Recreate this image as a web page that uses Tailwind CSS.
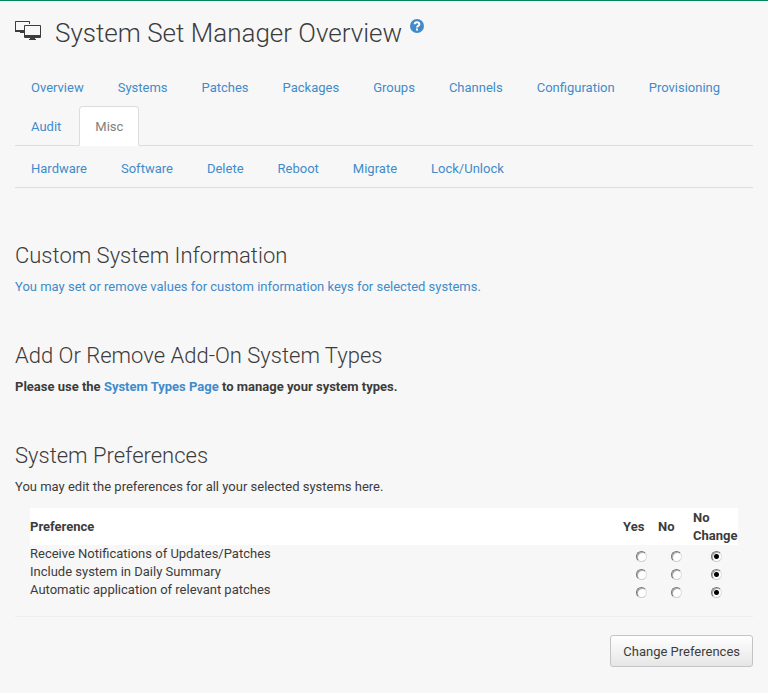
<!DOCTYPE html>
<html lang="en"><head><meta charset="utf-8"><title>System Set Manager Overview</title>
<script src="https://cdn.jsdelivr.net/npm/@tailwindcss/browser@4"></script></head>
<body class="min-h-screen border-t border-[#00895e] bg-[#f7f7f7] font-[Roboto,sans-serif] text-[13px] leading-[18px] text-[#3c3c3c]">
<main class="px-[15px] pb-6">
<h1 class="flex items-start pt-4 text-[26px] font-light leading-8">
<svg class="mt-1 mr-[14px]" width="26" height="20" viewBox="0 0 26 20" aria-hidden="true"><rect width="15" height="11" rx=".5" fill="#3c3c3c"/><rect x="1" y="1" width="13" height="8" fill="#f7f7f7"/><rect x="5" y="11" width="4" height="1" fill="#3c3c3c"/><rect x="8" y="3" width="18" height="6" fill="#f7f7f7"/><rect x="9" y="4" width="17" height="13" rx="1" fill="#3c3c3c"/><rect x="10" y="5" width="15" height="9" fill="#f7f7f7"/><path d="M15 17h5v1h1v1h-7v-1h1z" fill="#3c3c3c"/></svg>
System Set Manager Overview
<a href="#" aria-label="Help" class="ml-2 mt-[2px]"><svg width="14" height="14" viewBox="0 0 14 14"><circle cx="7" cy="7" r="7" fill="#428bca"/><path d="M4.600 5.300C4.800 2.600 9.400 2.600 9.400 5.200C9.400 7 7 6.800 7 8.500M7 9.500v2" stroke="#fff" stroke-width="2" fill="none"/></svg></a></h1>
<nav aria-label="Sections" class="mt-[18px] border-b border-[#ddd] text-[#428bca]"><ul class="flex flex-wrap">
<li class="mr-[2px] -mb-px"><a href="#" class="block border border-transparent px-[15px] pt-[11px] pb-[9px]">Overview</a></li>
<li class="mr-[2px] -mb-px"><a href="#" class="block border border-transparent px-[15px] pt-[11px] pb-[9px]">Systems</a></li>
<li class="mr-[2px] -mb-px"><a href="#" class="block border border-transparent px-[15px] pt-[11px] pb-[9px]">Patches</a></li>
<li class="mr-[2px] -mb-px"><a href="#" class="block border border-transparent px-[15px] pt-[11px] pb-[9px]">Packages</a></li>
<li class="mr-[2px] -mb-px"><a href="#" class="block border border-transparent px-[15px] pt-[11px] pb-[9px]">Groups</a></li>
<li class="mr-[2px] -mb-px"><a href="#" class="block border border-transparent px-[15px] pt-[11px] pb-[9px]">Channels</a></li>
<li class="mr-[2px] -mb-px"><a href="#" class="block border border-transparent px-[15px] pt-[11px] pb-[9px]">Configuration</a></li>
<li class="mr-[2px] -mb-px"><a href="#" class="block border border-transparent px-[15px] pt-[11px] pb-[9px]">Provisioning</a></li>
<li class="mr-[2px] -mb-px"><a href="#" class="block border border-transparent px-[15px] pt-[11px] pb-[9px]">Audit</a></li>
<li class="mr-[2px] -mb-px"><a href="#" aria-current="page" class="block rounded-t border border-[#ddd] border-b-white bg-white px-[15px] pt-[11px] pb-[9px] text-[#808080]">Misc</a></li></ul></nav>
<nav aria-label="Misc" class="mt-[2px] border-b border-[#ddd] text-[#428bca]"><ul class="flex flex-wrap">
<li class="mr-[2px] -mb-px"><a href="#" class="block border border-transparent px-[15px] pt-[11px] pb-[9px]">Hardware</a></li>
<li class="mr-[2px] -mb-px"><a href="#" class="block border border-transparent px-[15px] pt-[11px] pb-[9px]">Software</a></li>
<li class="mr-[2px] -mb-px"><a href="#" class="block border border-transparent px-[15px] pt-[11px] pb-[9px]">Delete</a></li>
<li class="mr-[2px] -mb-px"><a href="#" class="block border border-transparent px-[15px] pt-[11px] pb-[9px]">Reboot</a></li>
<li class="mr-[2px] -mb-px"><a href="#" class="block border border-transparent px-[15px] pt-[11px] pb-[9px]">Migrate</a></li>
<li class="mr-[2px] -mb-px"><a href="#" class="block border border-transparent px-[15px] pt-[11px] pb-[9px]">Lock/Unlock</a></li></ul></nav>
<section class="mt-[54px]">
<h2 class="text-[22px] font-light leading-7">Custom System Information</h2>
<p class="mt-2"><a href="#" class="text-[#428bca]">You may set or remove values for custom information keys for selected systems.</a></p>
</section>
<section class="mt-[46px]">
<h2 class="text-[22px] font-light leading-7">Add Or Remove Add-On System Types</h2>
<p class="mt-2 font-bold">Please use the <a href="#" class="text-[#428bca]">System Types Page</a> to manage your system types.</p>
</section>
<section class="mt-[46px]">
<h2 class="text-[22px] font-light leading-7">System Preferences</h2>
<p class="mt-2">You may edit the preferences for all your selected systems here.</p>
<form>
<div class="mt-3 px-[15px]">
<table class="w-full table-fixed text-left">
<colgroup><col><col class="w-[35px]"><col class="w-[35px]"><col class="w-[45px]"></colgroup>
<thead class="bg-white"><tr><th scope="col" class="pt-px">Preference</th><th scope="col" class="pt-px">Yes</th><th scope="col" class="pt-px">No</th><th scope="col" class="pt-px">No Change</th></tr></thead>
<tbody id="prefs"></tbody></table></div>
<div class="mt-[17px] flex justify-end border-t border-[#eee] pt-[18px]"><button type="button" class="h-8 rounded-[3px] border border-[#c4c4c4] bg-linear-to-b from-white to-[#e6e6e6] px-3 pt-[2px]">Change Preferences</button></div>
</form></section>
</main>
<script>
const preferences = [
  ['notify', 'Receive Notifications of Updates/Patches'],
  ['summary', 'Include system in Daily Summary'],
  ['autoapply', 'Automatic application of relevant patches']
];
document.getElementById('prefs').innerHTML = preferences.map(([name, label]) =>
  '<tr><td>' + label + '</td>' + ['Yes', 'No', 'No change'].map(option =>
    '<td class="pl-[2px]"><div class="flex h-[18px] items-end justify-center pb-px">' +
    '<input type="radio" aria-label="' + label + ': ' + option + '" name="' + name + '" value="' + option + '"' + (option === 'No change' ? ' checked' : '') +
    ' class="size-[11px] appearance-none rounded-full border border-t-[#777] border-l-[#777] border-r-[#ddd] border-b-[#ccc] bg-white shadow-[inset_1px_1px_0_#aaa] checked:bg-[radial-gradient(circle,#000_2px,#fff_3px)]"></div></td>'
  ).join('') + '</tr>').join('');
</script>
</body></html>
